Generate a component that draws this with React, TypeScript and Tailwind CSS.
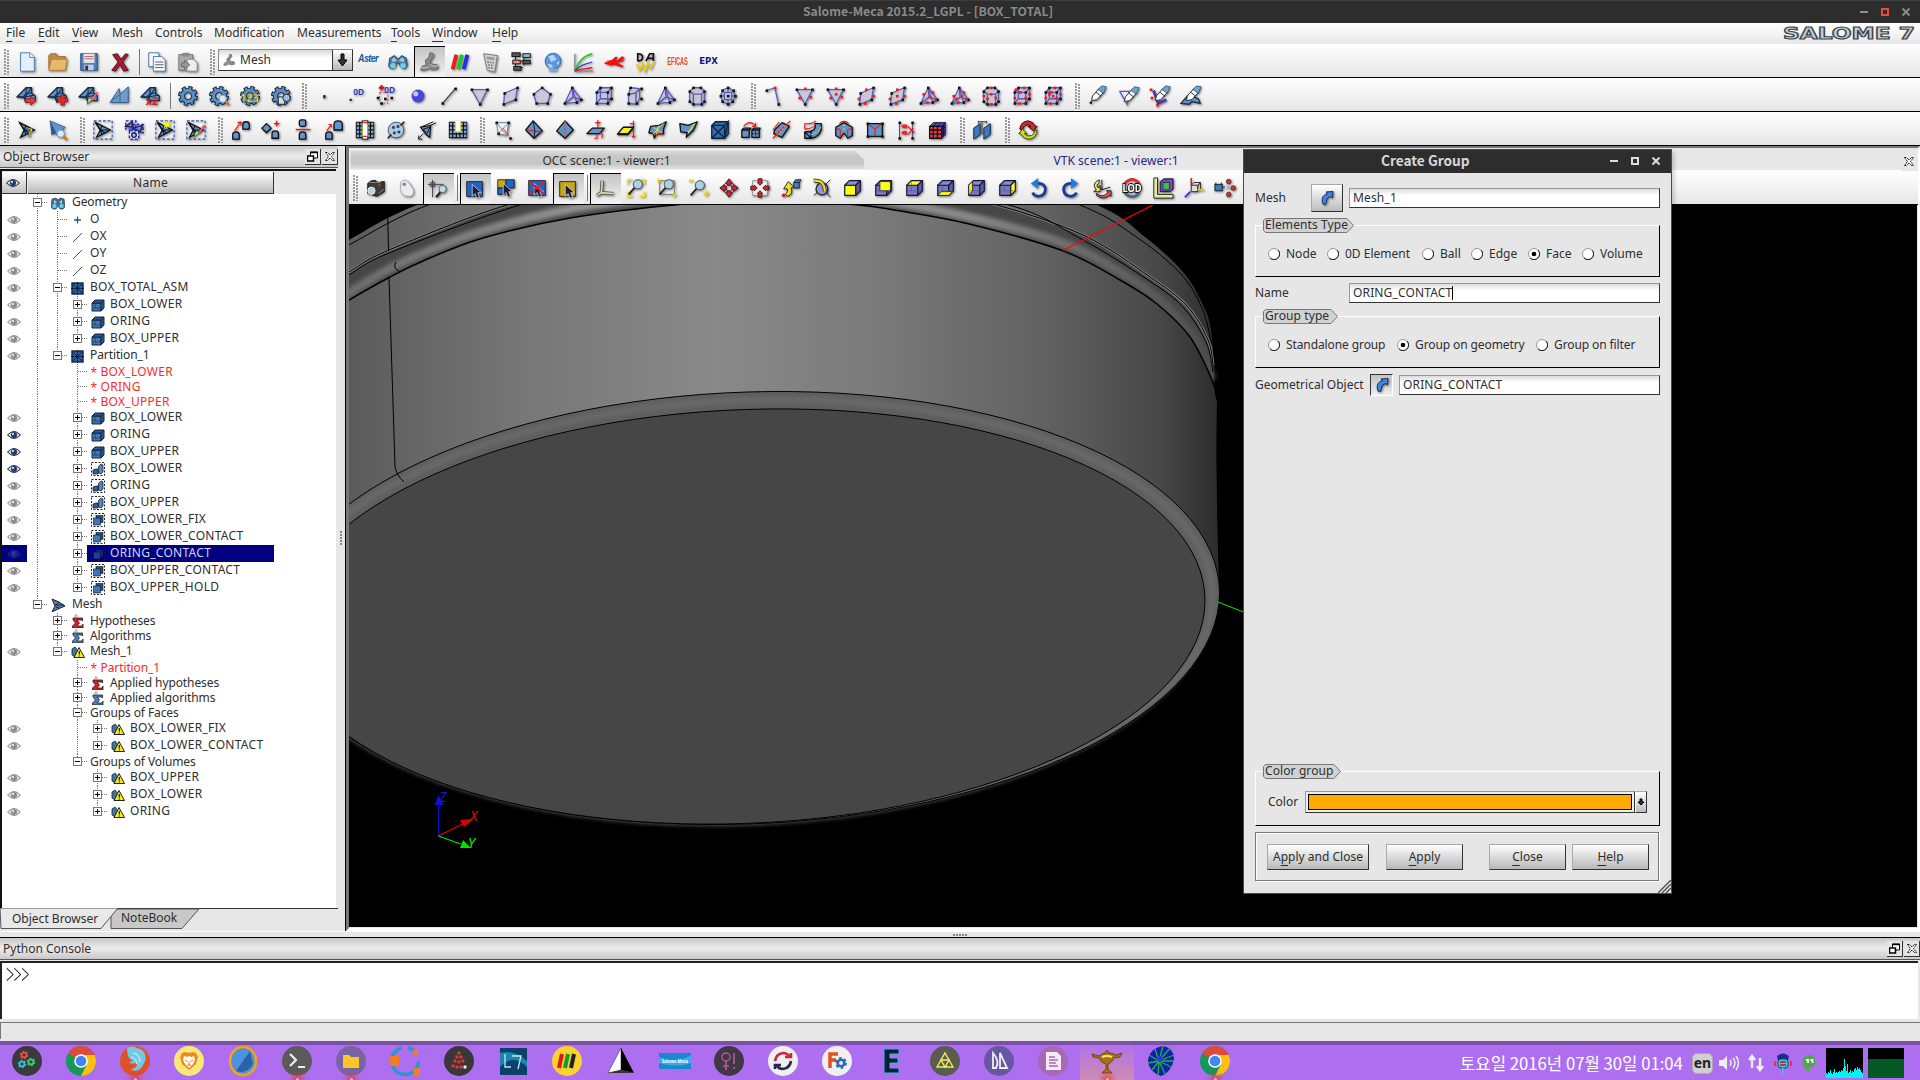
import React from "react";

type Pt = [number, number];

/* ---------- small drawing helpers ---------- */

const Dots = ({ p, c = "#111" }: { p: Pt[]; c?: string }) => (
  <>
    {p.map(([x, y], i) => (
      <rect key={i} x={x - 1.2} y={y - 1.2} width={2.8} height={2.8} fill={c} stroke="none" />
    ))}
  </>
);

const Wire = ({ d, p, r = [] }: { d: string; p: Pt[]; r?: Pt[] }) => (
  <g>
    <path d={d} fill="#dcdcf4" fillOpacity={0.6} stroke="#5a5ab8" strokeWidth={1.4} />
    <Dots p={p} />
    <Dots p={r} c="#f01818" />
  </g>
);

const BLUE = "#5f93cc";

const MeshTri = ({ children }: { children?: React.ReactNode }) => (
  <g>
    <path d="M1 13L11 3h6v6l4 3v5H12l-1 2-2-5z" fill={BLUE} stroke="#182c48" strokeWidth={1.5} strokeLinejoin="round" />
    <path d="M1 13h9l7-10M11 3v6l-3 4M10 13l10-2M10 13v4M11 9h6" stroke="#182c48" strokeWidth={1.2} fill="none" />
    {children}
  </g>
);

const Gear = ({ children }: { children?: React.ReactNode }) => (
  <g>
    <circle cx={12} cy={12} r={8.2} fill="none" stroke="#13263d" strokeWidth={5.4} strokeDasharray="4 2.44" />
    <circle cx={12} cy={12} r={6} fill="none" stroke="#13263d" strokeWidth={5.6} />
    <circle cx={12} cy={12} r={8.2} fill="none" stroke="#5d8fc4" strokeWidth={3.2} strokeDasharray="2.4 4.04" strokeDashoffset={-0.8} />
    <circle cx={12} cy={12} r={6} fill="none" stroke="#5d8fc4" strokeWidth={3.6} />
    {children}
  </g>
);

const Lens = ({ x = 15, y = 15, r = 4 }: { x?: number; y?: number; r?: number }) => (
  <g>
    <path d={`M${x + r * 0.7} ${y + r * 0.7}l4 4`} stroke="#d8741c" strokeWidth={2.4} />
    <circle cx={x} cy={y} r={r} fill="#d7ecf8" stroke="#7a93a8" />
  </g>
);

const Brush = ({ x = 0, y = 0 }: { x?: number; y?: number }) => (
  <g transform={`translate(${x} ${y})`}>
    <path d="M19 7l-6 9" stroke="#e33" strokeWidth={2.2} />
    <path d="M19 7l-6 9" stroke="#f9a" strokeWidth={0.8} />
    <path d="M13 15l-5 5 1-5 2-2z" fill="#d8f070" stroke="#3a5a10" strokeWidth={0.8} />
  </g>
);

const SelBox = ({ children }: { children?: React.ReactNode }) => (
  <g>
    <rect x={2} y={2} width={20} height={20} fill="none" stroke="#2c50b8" strokeWidth={1.2} strokeDasharray="3 2" />
    {children}
  </g>
);

const Arrowhead = () => (
  <g>
    <path d="M4 4l16 8-15 8 4-8z" fill={BLUE} stroke="#111" strokeWidth={1.4} />
    <path d="M9 12h11M4 4l5 8M9 12l2 5M11 7l-2 5l5 3" stroke="#111" strokeWidth={1.2} fill="none" />
  </g>
);

const Grid3 = ({ children }: { children?: React.ReactNode }) => (
  <g>
    <rect x={2} y={3} width={20} height={18} fill="#111" />
    {[0, 1, 2, 3, 4].map((i) =>
      [0, 1, 2, 3].map((j) => (
        <rect key={`${i}-${j}`} x={3 + i * 3.9} y={4 + j * 4.3} width={2.6} height={2.9} fill="#7ba6d8" />
      ))
    )}
    {children}
  </g>
);

const Eraser = ({ x = 0, y = 0 }: { x?: number; y?: number }) => (
  <g transform={`translate(${x} ${y})`}>
    <path d="M5 17l1-5 7-8 5 4-7 8z" fill="#fff" stroke="#222" />
    <path d="M12 5l4-4 5 1-3 7z" fill="#6fa4cc" stroke="#1d4c6c" strokeWidth={0.8} />
    <path d="M10 8l5 4" stroke="#222" />
  </g>
);

const CubeIcon = ({ face }: { face: number }) => (
  <g stroke="#16163a" strokeWidth={1.3} strokeLinejoin="round">
    <path d="M3 9h12v11H3z" fill={face === 0 ? "#ffff10" : "#7878be"} />
    <path d="M3 9l5-5h12l-5 5z" fill={face === 2 ? "#ffff10" : "#8c8ccc"} />
    <path d="M15 9l5-5v11l-5 5z" fill={face === 5 ? "#ffff10" : "#5c5ca4"} />
    {face === 1 && <path d="M7 5h12v10H7z" fill="#ffff10" strokeWidth={0.8} />}
    {face === 3 && <path d="M3 20l4-4h12l-4 4z" fill="#ffff10" strokeWidth={0.8} />}
    {face === 4 && <path d="M3 9l4-4v10l-4 5z" fill="#ffff10" strokeWidth={0.8} />}
    {face !== 0 && <path d="M8 4v11H4M8 15h11" fill="none" stroke="#50509a" strokeWidth={0.6} />}
  </g>
);

const RedGeo = ({ d, r, extra }: { d: string; r: string; extra?: React.ReactNode }) => (
  <g>
    <path d={d} fill={BLUE} stroke="#111" strokeWidth={1.4} strokeLinejoin="round" />
    <path d={r} fill="none" stroke="#ee1818" strokeWidth={1.2} />
    {extra}
  </g>
);

const Cursor = () => <path d="M9 7v13l3-3 2 5 3-1-2-5h4z" fill="#1c1c3c" stroke="#ddd" strokeWidth={0.8} />;

/* ---------- icon collections ---------- */

const tri = "M3 5h17L12 21z";
const triP: Pt[] = [[3, 5], [20, 5], [12, 21]];
const quad = "M5 9l14-6-2 13-13 5z";
const quadP: Pt[] = [[5, 9], [19, 3], [17, 16], [4, 21]];
const pyr = "M11 3L3 20l13-1 5-3zM3 20l9-7 9 3M11 3l5 16M12 13L11 3";
const pyrP: Pt[] = [[11, 3], [3, 20], [16, 19], [21, 16]];
const hexa = "M4 8h12v12H4zM8 3h12v12H8zM4 8l4-5M16 8l4-5M16 20l4-5M4 20l4-5";
const hexaP: Pt[] = [[4, 8], [16, 8], [4, 20], [16, 20], [8, 3], [20, 3], [20, 15]];
const prism = "M8 3h8l4 4-3 3H8L4 7zM4 7v11l4 3h9l3-3V7M8 10v11M17 10v11";
const prismP: Pt[] = [[8, 3], [16, 3], [4, 7], [20, 7], [4, 18], [20, 18], [8, 21], [17, 21]];

const fileIcons = [
  <g><path d="M5 2h10l5 5v15H5z" fill="#e3efff" stroke="#4a78b8" /><path d="M15 2v5h5" fill="#fff" stroke="#4a78b8" /></g>,
  <g><path d="M2 5l2-2h6l2 3h8v14H2z" fill="#b98c48" stroke="#9a7030" /><path d="M5 9h17l-2 12H2z" fill="#e8b968" stroke="#b58638" /></g>,
  <g><rect x={3} y={3} width={18} height={18} fill="#4c7fc4" stroke="#284c84" /><rect x={6} y={3} width={12} height={10} fill="#e6e6e0" /><path d="M7 6h10M7 8.500h10" stroke="#b44" strokeWidth={0.8} /><rect x={7} y={15} width={10} height={6} fill="#c8ccd4" /><rect x={8} y={16} width={3} height={5} fill="#333" /></g>,
  <path d="M4 4l5-1 4 6 5-6 3 1-6 8 6 9-5 1-4-7-5 7-4-1 7-9z" fill="#a51c30" stroke="#5a0c18" />,
];
const editIcons = [
  <g stroke="#4878a8" fill="#f4f8ff"><path d="M3 2h11v15H3z" /><path d="M8 6h9l4 4v12H8z" /><path d="M10 12h9M10 15h9M10 18h9" stroke="#555" /></g>,
  <g><rect x={2} y={4} width={15} height={17} fill="#aaa" stroke="#777" /><rect x={6} y={2} width={7} height={4} fill="#888" /><path d="M11 9h7l4 4v9H11z" fill="#eee" stroke="#888" /><path d="M14 15l-6-5v3H5v4h3v3z" fill="#999" stroke="#666" /></g>,
];
const moduleIcons = [
  <g><path d="M3 8l5-3 4 4 4-4 5 3 1 7c0 5-7 6-8 0l-1-2h-2l-1 2c-1 6-9 5-8 0z" fill="#4a7ca8" stroke="#1f3f60" /><path d="M5 9l3-2 3 4-5 1zM19 9l-3-2-3 4 5 1z" fill="#a4c4e0" /><circle cx={6.500} cy={16} r={3} fill="#6fd0e2" /><circle cx={17.500} cy={16} r={3} fill="#6fd0e2" /></g>,
  <g><path d="M13 2q5 0 4 4l-3 4-1 4 8 1 1 4q-6 3-10 0-5 3-9 2l1-4 5-2-1-5 4-3z" fill="#8a8a8a" stroke="#666" /><path d="M3 18q5 1 9 0M13 15q5 3 9 1" stroke="#c8c8c8" /></g>,
  <g strokeWidth={4.200}><path d="M4 20L8 4" stroke="#f01c1c" /><path d="M10 20l4-16" stroke="#20c820" /><path d="M16 20l4-16" stroke="#2030e8" /></g>,
  <g><path d="M4 3l15 2-3 18-8-2z" fill="#cfcfcf" stroke="#777" /><path d="M7 6l9 1-.5 3-8-1z" fill="#9a9a9a" /><path d="M8 12l7 1M9 15l5 1M9 18l5 1" stroke="#777" strokeWidth={1.600} strokeDasharray="2 1" /></g>,
  <g><path d="M5 4v14h8M5 11h12M14 4v12" stroke="#111" fill="none" /><rect x={1} y={2} width={9} height={4} fill="#555" stroke="#111" /><rect x={13} y={3} width={8} height={4} fill="#8bd" stroke="#111" /><rect x={2} y={10} width={8} height={4} fill="#f88" stroke="#111" /><rect x={13} y={10} width={8} height={4} fill="#555" stroke="#111" /><rect x={3} y={17} width={8} height={4} fill="#555" stroke="#111" /></g>,
  <g><circle cx={12} cy={11} r={8.500} fill="#5b97dc" stroke="#3a6cae" /><path d="M7 6l5-2 4 5-6 3zM6 14l5 1 1 4-4-1zM16 13l3-2-1 5z" fill="#b4d4f4" /><path d="M8 19h8l1 3H7z" fill="#7aaede" /></g>,
  <g fill="none" strokeWidth={1.400}><path d="M2 22V3M2 22h20" stroke="#888" /><path d="M2 22C6 10 12 5 21 3" stroke="#10d010" /><path d="M2 22c4-6 11-8 19-10" stroke="#2030e8" /><path d="M2 22c6-3 10-2 19-4" stroke="#f01818" /></g>,
  <g fill="#f01010"><path d="M1 11l7-1 5-4 2 1-2 3h8l1 1-8 2 7 3-1 2-9-3-3 1-7-2-1-1 5-2z" /><path d="M15 10l5-4 2 2-5 3M14 13l7 4" stroke="#f01010" /></g>,
  <g fill="none"><path d="M3 11V3c8 0 6 8 0 8M12 11l4-8h4v8M13 8h7" stroke="#111" strokeWidth={1.800} /><path d="M2 14l3 7 3-7 3 8 3-9 3 6 4-8" stroke="#e8cc10" strokeWidth={1.800} /></g>,
];

const row2a = [
  <MeshTri><path d="M10 15h6v-3l6 5-6 5v-3h-6z" fill="#e33" stroke="#611" strokeWidth={0.700} /></MeshTri>,
  <MeshTri><path d="M15 11h4v3.500h3.500v4H19V22h-4v-3.500h-3.500v-4H15z" fill="#e22" stroke="#611" strokeWidth={0.600} /></MeshTri>,
  <MeshTri><Brush x={2} y={1} /></MeshTri>,
  <g><path d="M1 19L11 4l1 6 9-8v17z" fill="#6d9cd0" stroke="#345c8a" /><path d="M12 10v9M3 17l8-6" stroke="#345c8a" /></g>,
  <MeshTri><text x={6} y={22} fontSize={12} fontWeight={700} fill="#e01c1c" fontFamily="Noto Sans, sans-serif">x2</text></MeshTri>,
];
const gears = [
  <Gear />,
  <Gear><Lens x={16} y={15} /></Gear>,
  <Gear><text x={1.500} y={18} fontSize={11} fontWeight={700} fill="#ffff20" stroke="#444" strokeWidth={0.300} textLength={20} fontFamily="Noto Sans, sans-serif">123</text></Gear>,
  <Gear><path d="M9 13h7v8H9z" fill="#cfdeee" stroke="#222" /><circle cx={18} cy={14} r={4} fill="#9cc0e4" stroke="#222" /></Gear>,
];
const row2b = [
  <rect x={10} y={11} width={2.500} height={3.500} fill="#222" />,
  <g><text x={9} y={11} fontSize={9.500} fontWeight={600} fill="#2038c0" fontFamily="Noto Sans, sans-serif" textLength={12} lengthAdjust="spacingAndGlyphs">0D</text><rect x={5} y={15} width={2.400} height={2.400} fill="#222" /></g>,
  <g><path d="M3 3h6M6 0v6" stroke="#d01020" strokeWidth={2.200} /><text x={9} y={9} fontSize={9.500} fontWeight={600} fill="#2038c0" fontFamily="Noto Sans, sans-serif" textLength={12} lengthAdjust="spacingAndGlyphs">0D</text><path d="M4 8h9v12H4z" stroke="#e02838" strokeDasharray="2 2" fill="none" /><Dots p={[[2, 14], [10, 15], [6, 20], [17, 14]]} /></g>,
  <g><circle cx={12} cy={12} r={7} fill="#4646d8" /><circle cx={9.500} cy={9.500} r={2.800} fill="#c4c4ff" /></g>,
  <g><path d="M5 20L19 4" stroke="#444" strokeWidth={1.500} /><Dots p={[[5, 20], [19, 4]]} /></g>,
  <Wire d={tri} p={triP} />,
  <Wire d={quad} p={quadP} />,
  <Wire d="M12 3l9 7-3 10H6L3 10z" p={[[12, 3], [21, 10], [18, 20], [6, 20], [3, 10]]} />,
  <Wire d={pyr} p={pyrP} />,
  <Wire d={hexa} p={hexaP} />,
  <Wire d="M7 3l10 1-5 5-7 1zM5 10v10l8 1V9M17 4v11l-4 6" p={[[7, 3], [19, 4], [5, 10], [5, 20], [14, 20], [19, 15]]} />,
  <Wire d={pyr} p={pyrP} />,
  <Wire d={prism} p={prismP} />,
  <Wire d="M12 3l5 3 3 6-3 6-5 3-6-3-2-6 2-6zM8 8h8v8H8zM12 3v5M4 12h4M16 12h4M12 16v5" p={[[12, 3], [18, 6], [20, 12], [17, 18], [12, 21], [6, 18], [4, 12], [6, 6], [12, 12]]} />,
];
const row2c = [
  <g><path d="M4 6l9-3 4 18" stroke="#5a5ac4" strokeWidth={1.400} fill="none" /><Dots p={[[4, 6], [17, 21]]} /><Dots p={[[13, 3]]} c="#f01818" /></g>,
  <Wire d={tri} p={triP} r={[[12, 4], [6, 14], [18, 13]]} />,
  <Wire d={tri} p={triP} r={[[12, 4], [6, 14], [18, 13], [12, 10]]} />,
  <Wire d={quad} p={quadP} r={[[11, 5], [19, 12], [10, 20], [3, 15]]} />,
  <Wire d={quad} p={quadP} r={[[11, 5], [19, 12], [10, 20], [3, 15], [11, 12]]} />,
  <Wire d={pyr} p={pyrP} r={[[6, 10], [10, 19], [16, 8], [13, 13], [19, 17]]} />,
  <Wire d={pyr} p={pyrP} r={[[5, 12], [10, 19], [16, 8], [8, 15], [19, 16], [14, 12]]} />,
  <Wire d={prism} p={prismP} r={[[12, 3], [4, 12], [8, 15], [17, 14], [12, 21], [12, 10]]} />,
  <Wire d={hexa} p={hexaP} r={[[14, 3], [4, 14], [9, 20], [16, 14], [20, 10], [10, 8], [5, 5]]} />,
  <Wire d={hexa} p={hexaP} r={[[14, 3], [4, 14], [9, 20], [16, 14], [20, 10], [10, 8], [12, 12], [8, 10]]} />,
];
const row2d = [
  <g><Eraser /><rect x={3} y={18} width={2.500} height={2.500} fill="#111" /></g>,
  <g><path d="M2 7h10l-2 14z" fill="#e8e8fa" stroke="#5a5ac4" strokeWidth={1.400} /><Eraser x={2} y={1} /></g>,
  <g><path d="M5 6l5 14 9-4" fill="none" stroke="#3c3cb0" strokeWidth={3} /><Dots p={[[2, 5], [3, 14], [9, 22]]} c="#f01818" /><Eraser x={2} /></g>,
  <g><path d="M1 20l8-9 11 4 2 5-9-2-3 3z" fill={BLUE} stroke="#14304c" strokeWidth={1.400} /><Eraser x={2} /></g>,
];

const row3a = [
  <g><Arrowhead /><text x={12} y={20} fontSize={13} fontWeight={700} fill="#ffee20" stroke="#333" strokeWidth={0.500} fontFamily="Noto Sans, sans-serif">?</text></g>,
  <g><path d="M3 2l17 7-4 3 1 6-7-1z" fill={BLUE} stroke="#335" strokeWidth={0.600} /><path d="M3 2l2 16 5-3z" fill="#2f5a8c" /><Lens x={15} y={16} /></g>,
];
const row3b = [
  <SelBox><Arrowhead /></SelBox>,
  <g fill="none" stroke="#1c1cd8" strokeWidth={1.500}><path d="M3 8l7-5 1 6zM11 10l10-3-2 7z" fill={BLUE} stroke="#223" /><rect x={3} y={2} width={11} height={9} strokeDasharray="3 2" /><rect x={10} y={6} width={12} height={9} strokeDasharray="3 2" /><rect x={7} y={13} width={10} height={9} fill="#dfe8f4" strokeDasharray="3 2" /><circle cx={12} cy={17.500} r={2.500} fill="#9cc0e4" stroke="#223" /></g>,
  <SelBox><Arrowhead /><path d="M14 2v8M10 6h8M11 3l6 6M17 3l-6 6" stroke="#f4f430" strokeWidth={1.400} /></SelBox>,
  <SelBox><Arrowhead /><Brush x={2} /></SelBox>,
];
const bell = (x: number, y: number) => `M${x} ${y + 8}v-5q0-3 3.500-3t3.500 3v5z`;
const row3c = [
  <g><path d={bell(14, 3)} fill={BLUE} stroke="#111" strokeWidth={1.400} /><path d={bell(3, 14)} fill={BLUE} stroke="#111" strokeWidth={1.400} /><path d="M5 13l7-10M12 3l-4 1M12 3v4" stroke="#e11" fill="none" strokeWidth={1.200} /></g>,
  <g><path d="M1 10l5-5 5 5-5 5z" fill={BLUE} stroke="#111" strokeWidth={1.400} /><path d={bell(12, 13)} fill={BLUE} stroke="#111" strokeWidth={1.400} /><path d="M14 5h6M17 2v6" stroke="#e11" strokeWidth={1.500} /></g>,
  <g><rect x={8} y={1} width={7} height={7} rx={2} fill={BLUE} stroke="#111" strokeWidth={1.400} /><path d={bell(8, 14)} fill={BLUE} stroke="#111" strokeWidth={1.400} /><path d="M4 11.500h16" stroke="#e11" strokeWidth={1.500} /></g>,
  <g><path d="M12 12V6q0-4 4.500-4T21 6v6z" fill={BLUE} stroke="#111" strokeWidth={1.400} /><path d={bell(3, 14)} fill={BLUE} stroke="#111" strokeWidth={1.400} /><path d="M4 13l5-7M9 6H6M9 6v3" stroke="#e11" fill="none" strokeWidth={1.200} /></g>,
  <Grid3><rect x={9} y={2} width={6} height={20} fill="#fff" stroke="#111" /><path d="M9 5v14M15 5v14" stroke="#e8d820" /><path d="M10 4h4M10 19h4" stroke="#e02020" strokeWidth={1.500} /></Grid3>,
  <g><circle cx={12} cy={12} r={8.500} fill="#aacbe8" stroke="#456" /><path d="M3 21l4-4M21 3l-4 4" stroke="#111" strokeWidth={1.600} /><Dots p={[[9, 9], [14, 8], [15, 14], [10, 15]]} c="#334" /></g>,
  <g><path d="M5 9l11-2-1 13-4-3z" fill={BLUE} stroke="#111" strokeWidth={1.300} /><path d="M8 11l7-2-3 7zM5 9l14-6M2 22l6-6M3 22v-4M3 22h4M16 7l6-3" stroke="#111" fill="none" /></g>,
  <Grid3><path d="M9 2h6v12H9z" fill="#fff" /><path d="M9 3v11h6V3" fill="none" stroke="#e8d820" strokeWidth={1.200} /></Grid3>,
];
const row3d = [
  <g><path d="M5 4h13l-2 14-9-2zM5 4l11 14M18 4L7 16" fill="#eef" stroke="#688" /><Dots p={[[5, 4], [18, 4], [20, 21], [7, 16]]} /><path d="M12 10l6 8" stroke="#e11" /></g>,
  <RedGeo d="M11 2l10 11-9 8-9-9z" r="M4 12l16 2" extra={<path d="M11 2l2 11-1 8" stroke="#111" fill="none" />} />,
  <RedGeo d="M12 2l9 10-9 9-9-8z" r="" extra={<path d="M12 2v18" stroke="#f04010" strokeWidth={1.600} strokeDasharray="2 2" />} />,
  <RedGeo d="M8 10h13l-5 6H2z" r="M14 1v9M11 4h6M13 17v4h-3M16 15q5 1 2 6" />,
  <RedGeo d="M8 10h11l-6 7H2z" r="M19 2v19M15 5h5M17 19h4" extra={<path d="M8 9h11l-6 7H2z" fill="#ffee20" stroke="#111" strokeWidth={1.400} />} />,
  <RedGeo d="M4 8l9-1 8-4-3 8 0 5-8 1-2 4-1-5-5-1z" r="M8 16l10 1" extra={<path d="M7 9l9 6M18 4L6 17M13 7l-3 10" stroke="#f0e840" />} />,
  <RedGeo d="M2 5l9 2 10-4-4 9-8 8 1-5-7-1z" r="" extra={<path d="M18 5l-7 10" stroke="#f0e840" strokeWidth={1.300} />} />,
  <g><path d="M3 7l4-4h14v13l-4 5H3z" fill="#346ba8" stroke="#0c2444" strokeWidth={1.400} /><path d="M3 7h14v14M3 7l14 14L21 3l-4 4M17 7L3 21" stroke="#0c2444" fill="none" strokeWidth={1.500} /></g>,
  <RedGeo d="M2 12h8v8H2zM13 12h8v8h-8zM2 12l2-2h8l-2 2M13 12l2-2h7l-1 2" r="M4 8q7-8 13 0M17 8v-4M17 8h-4" extra={<path d="M17 12v8M13 16h8" stroke="#333" />} />,
  <RedGeo d="M4 12l8-8 8 4-8 12-9-4z" r="M2 21L21 2M2 12L9 3" extra={<path d="M7 18L17 6" stroke="#f0e840" strokeDasharray="2 2" />} />,
  <RedGeo d="M3 14h7v7H3zM3 14q14 0 11-9h7v7q-3 8-11 9z" r="M3 5q8 1 12-3M3 5v6M3 11q8 0 12-5" extra={<path d="M10 17q8-2 11-9" stroke="#fe2" fill="none" strokeDasharray="2 2" />} />,
  <RedGeo d="M3 9l9-5 9 5v9l-5 3-4-6-4 6-5-3z" r="M4 10l4 2v8M20 10l-4 2v8M7 5q5-5 10 0" extra={<path d="M12 6v9" stroke="#fe2" strokeDasharray="2 2" />} />,
  <RedGeo d="M4 5h16v14H4z" r="M4 5l8 6 8-6M12 11v8" extra={<Dots p={[[4, 5], [20, 5], [4, 19], [20, 19]]} />} />,
  <g><path d="M5 4v17M19 4v17" stroke="#346" /><path d="M7 8h6M7 15h6M14 8l7 7M14 17l6-7" stroke="#e11" strokeWidth={1.300} /><Dots p={[[5, 4], [5, 21], [19, 4], [19, 21]]} /><rect x={8} y={6} width={5} height={4} fill="#e22" /><rect x={8} y={13} width={5} height={4} fill="#e22" /></g>,
  <g><path d="M4 8l4-4h13l-4 4z" fill="#5050d0" stroke="#112" /><path d="M17 8l4-4v13l-4 4z" fill="#3838a8" stroke="#112" /><path d="M17 12.500l4-4M17 16.500l4-4M19 6v13M8 8l4-4M12.500 8l4-4" stroke="#111" /><path d="M4 8h13v13H4z" fill="#f04040" stroke="#111" strokeWidth={1.400} /><path d="M8 8v13M12.500 8v13M4 12h13M4 16.500h13" stroke="#111" strokeWidth={1.500} /></g>,
];
const row3e = [
  <g><path d="M3 10l7-5v12l-7 5zM14 10l7-5v12l-7 5z" fill="#3f78bc" stroke="#0c2444" /><path d="M8 3h9M8 2v3M17 2v3M12 3v14" stroke="#333" fill="none" /></g>,
];
const row3f = [
  <g><path d="M3 11Q4 3 12 2q6 1 8 6l2 0-4 5-6-5h3q-3-3-6-1-2 1-3 5z" fill="#c03030" stroke="#400" /><path d="M22 12q0 8-8 10-7 0-10-6H2l4-5 5 5H8q4 4 8 2 3-1 3-5z" fill="#c8e020" stroke="#340" /></g>,
];

const view = {
  camera: <g><path d="M3 7l4-3h5l2 2 7-1v11l-8 5-10-3z" fill="#3a3a3a" stroke="#111" /><path d="M5 6h12M15 18l6-5" stroke="#888" /><circle cx={7} cy={15} r={4} fill="#b8d4e0" stroke="#eee" /><rect x={14} y={8} width={3} height={2} fill="#e22" /></g>,
  mouse: <g><path d="M5 6q4-5 9 0l5 8q1 8-6 7-6 0-8-7z" fill="#ececec" stroke="#aaa" /><circle cx={9} cy={8} r={2} fill="#7a8cc8" /></g>,
  zoomAxis: <g><path d="M1 7h17M6 2v19" stroke="#444" /><rect x={4} y={5} width={4} height={4} fill="none" stroke="#444" /><path d="M15 15l-5 6" stroke="#222" strokeWidth={2.500} /><circle cx={17} cy={12} r={4} fill="#bcdde4" stroke="#556" /></g>,
  selBlue: <g><rect x={3} y={4} width={17} height={16} fill="#1c66c8" stroke="#222" /><Cursor /></g>,
  selHalf: <g><path d="M3 3h9v9H3z" fill="#c4a818" stroke="#333" /><path d="M12 3h9v9h-9zM3 12h9v7H3z" fill="#1c66c8" stroke="#222" /><Cursor /></g>,
  selRed: <g><rect x={3} y={4} width={18} height={16} fill="#1c66c8" stroke="#222" /><Cursor /><path d="M4 5l16 14M20 5L4 19" stroke="#e02030" strokeWidth={1.800} /></g>,
  selGold: <g><rect x={3} y={4} width={17} height={16} fill="#c4a818" stroke="#222" /><Cursor /></g>,
  axes: <g><path d="M9 3l-1 13 13 1M8 16l-5 3" stroke="#555" strokeWidth={3.600} fill="none" /><path d="M9 3l-1 13 13 1M8 16l-5 3" stroke="#d8d8a8" strokeWidth={1.800} fill="none" /></g>,
};
const bigLens = (x: number, y: number) => (
  <g><path d={`M${x - 3} ${y + 3}l-7 8`} stroke="#222" strokeWidth={2} /><circle cx={x} cy={y} r={5} fill="#a8d4de" stroke="#445" /></g>
);
const viewMore = [
  <g><path d="M3 8V3h5M16 3h5v5M21 16v5h-5M8 21H3v-5" stroke="#f0e800" strokeWidth={1.800} fill="none" />{bigLens(14, 8)}</g>,
  <g><rect x={4} y={4} width={16} height={15} fill="none" stroke="#777" />{bigLens(14, 8)}<path d="M3 2v4M1 4h4M20 18v4M18 20h4" stroke="#e8d800" strokeWidth={1.500} /></g>,
  <g><path d="M2 4h5M18 18h6M21 15v6" stroke="#e8d800" strokeWidth={1.800} />{bigLens(14, 9)}</g>,
  <g fill="#c02838" stroke="#511"><path d="M12 2l4 5h-2v2h-4V7H8zM12 22l4-5h-2v-2h-4v2H8zM2 12l5-4v2h2v4H7v2zM22 12l-5-4v2h-2v4h2v2z" /></g>,
  <g fill="#c02838" stroke="#511"><path d="M4 4h16v16H4z" fill="#eee" stroke="#888" /><path d="M12 9L9 6h1V2h4v4h1zM12 15l-3 3h1v4h4v-4h1zM9 12L6 9v1H2v4h4v1zM15 12l3-3v1h4v4h-4v1z" /></g>,
  <g><path d="M15 6h6v6h-6zM15 6l2-3h6l-2 3" fill="#4a80b8" stroke="#123" /><path d="M8 21q7-2 4-9l3-1-6-6-5 8 4 0q1 3-2 6z" fill="#f0e020" stroke="#222" /><circle cx={4} cy={20} r={2} fill="#c22" /></g>,
  <g><circle cx={12} cy={13} r={6.500} fill="#9494d0" stroke="#223" strokeWidth={1.400} /><path d="M3 4q12-1 12 12" stroke="#222" strokeWidth={4} fill="none" /><path d="M3 4q12-1 12 12" stroke="#f0e020" strokeWidth={2.400} fill="none" /><path d="M16 8l5-5M17 17l4 5M3 20l4-3" stroke="#222" /></g>,
  ...[0, 1, 2, 3, 4, 5].map((f) => <CubeIcon face={f} />),
  <g><path d="M9 7q9-1 10 6 0 7-7 8-5 0-7-4" stroke="#1a3c94" strokeWidth={3} fill="none" /><path d="M3 7l8-6v12z" fill="#1a80e0" /></g>,
  <g><path d="M15 7q-9-1-10 6 0 7 7 8 5 0 7-4" stroke="#1a3c94" strokeWidth={3} fill="none" /><path d="M21 7l-8-6v12z" fill="#1a80e0" /></g>,
  <g><path d="M10 3Q1 7 7 14l-3 2h7v-7l-2 3q-3-3 1-6z" fill="#f0e870" stroke="#222" /><path d="M7 18q7 6 13-2l-2-1h5v6l-2-1q-6 6-14 0z" fill="#e05050" stroke="#222" /><path d="M13 3v11l9-3M13 14l-2-3" stroke="#111" fill="none" /></g>,
  <g><path d="M4 7q8-9 16 0M4 7v3M20 7v3" stroke="#c33" strokeWidth={3} fill="none" /><path d="M4 17q8 9 16 0" stroke="#468" strokeWidth={3} fill="none" /><text x={1.500} y={16} fontSize={11} fontWeight={700} fill="#fff" stroke="#111" strokeWidth={2} paintOrder="stroke" textLength={21} lengthAdjust="spacingAndGlyphs" fontFamily="Noto Sans, sans-serif">LOD</text></g>,
  <g><path d="M2 1v22h21v-4H6V1z" fill="#e4eca0" stroke="#222" /><path d="M9 5l4-3h10v11l-3 3H9z" fill="#7848b0" stroke="#111" /><path d="M12 6h7v8h-7z" fill="#40c040" stroke="#236" /></g>,
  <g><path d="M9 9h7v7H9zM9 9l3-3h7l-3 3M19 6v7l-3 3" fill="#ddd" stroke="#222" /><path d="M9 9V1" stroke="#e11" strokeWidth={1.600} /><path d="M8 16l-6 6" stroke="#33d" strokeWidth={1.800} /><path d="M16 14h7" stroke="#e8c800" strokeWidth={2} /></g>,
  <g><rect x={1} y={8} width={8} height={7} fill="#3a7cb8" stroke="#123" /><path d="M9 11h3M2 6v3M8 6v3" stroke="#123" /><circle cx={16} cy={5} r={2.500} fill="#c33" stroke="#533" /><circle cx={21} cy={12} r={2.500} fill="#c33" stroke="#533" /><circle cx={16} cy={19} r={2.500} fill="#c33" stroke="#533" /><path d="M13 9l5 5M18 9l-5 5" stroke="#999" /></g>,
];

/* ---------- tool bar parts ---------- */

const Slot = ({ children, on = false }: { children: React.ReactNode; on?: boolean }) => (
  <div
    className={
      on
        ? "flex h-[31px] w-[31px] shrink-0 items-center justify-center border-l border-t border-black bg-linear-to-b from-[#c4c4c4] to-[#f4f4f4]"
        : "flex h-[31px] w-[31px] shrink-0 items-center justify-center"
    }
  >
    <svg width={22} height={22} viewBox="0 0 24 24" fill="none" className="-translate-x-px drop-shadow-[1px_1px_1px_rgba(0,0,0,0.5)]">
      {children}
    </svg>
  </div>
);

const Slots = ({ items }: { items: React.ReactNode[] }) => (
  <>
    {items.map((n, i) => (
      <Slot key={i}>{n}</Slot>
    ))}
  </>
);

const Grip = () => (
  <svg width={5} height={26} className="shrink-0">
    {Array.from({ length: 9 }, (_, i) => (
      <g key={i} fill="#999">
        <rect x={0} y={i * 3} width={2} height={2} />
        <rect x={3} y={i * 3 + 1} width={2} height={2} />
      </g>
    ))}
  </svg>
);

const Sep = () => <div className="ml-[3px] mr-[2px] h-[26px] w-px shrink-0 bg-[#777]" />;

const Bar = ({ children }: { children: React.ReactNode }) => (
  <div className="flex h-[34px] shrink-0 items-center border-b border-black bg-linear-to-b from-white to-[#e6e6e6] pl-1 pt-[2px]">{children}</div>
);

const menus: [string, string, string][] = [
  ["F", "ile", "w-[32px]"], ["E", "dit", "w-[34px]"], ["V", "iew", "w-[40px]"], ["", "Mesh", "w-[43px]"],
  ["", "Controls", "w-[59px]"], ["", "Modification", "w-[83px]"], ["", "Measurements", "w-[94px]"],
  ["T", "ools", "w-[41px]"], ["W", "indow", "w-[60px]"], ["H", "elp", "w-[40px]"],
];

/* ---------- object tree ---------- */

type Row = { g: string; icon?: string; t: string; eye?: 0 | 1 | 2; h: 15 | 17; red?: boolean; sel?: boolean };
const r = (g: string, icon: string, t: string, eye: 0 | 1 | 2 = 1, h: 15 | 17 = 17): Row => ({ g, icon, t, eye, h });
const red = (g: string, t: string): Row => ({ g, t, h: 15, red: true, eye: 0 });

const rows: Row[] = [
  r("m", "geom", "Geometry", 0),
  r("|T", "plus", "O"), r("|T", "line", "OX"), r("|T", "line", "OY"), r("|T", "line", "OZ"),
  r("|m", "comp", "BOX_TOTAL_ASM"),
  r("||p", "solid", "BOX_LOWER"), r("||p", "solid", "ORING"), r("||q", "solid", "BOX_UPPER"),
  r("|n", "comp", "Partition_1"),
  red("| T", "BOX_LOWER"), red("| T", "ORING"), red("| T", "BOX_UPPER"),
  r("| p", "solid", "BOX_LOWER"), r("| p", "solid", "ORING", 2), r("| p", "solid", "BOX_UPPER", 2),
  r("| p", "gsolid", "BOX_LOWER", 2), r("| p", "gsolid", "ORING"), r("| p", "gsolid", "BOX_UPPER"),
  r("| p", "gface", "BOX_LOWER_FIX"), r("| p", "gface", "BOX_LOWER_CONTACT"),
  { ...r("| p", "gface", "ORING_CONTACT"), sel: true },
  r("| p", "gface", "BOX_UPPER_CONTACT"), r("| q", "gface", "BOX_UPPER_HOLD"),
  r("n", "mesh", "Mesh", 0),
  r(" p", "sigR", "Hypotheses", 0, 15), r(" p", "sigB", "Algorithms", 0, 15), r(" n", "warn", "Mesh_1"),
  red("  T", "Partition_1"),
  r("  p", "sigR", "Applied hypotheses", 0, 15), r("  p", "sigB", "Applied algorithms", 0, 15),
  r("  m", "", "Groups of Faces", 0, 15), r("  |p", "warn", "BOX_LOWER_FIX"), r("  |q", "warn", "BOX_LOWER_CONTACT"),
  r("  n", "", "Groups of Volumes", 0, 15),
  r("   p", "warn", "BOX_UPPER"), r("   p", "warn", "BOX_LOWER"), r("   q", "warn", "ORING"),
];

const Eye = ({ k, dim }: { k: number; dim?: boolean }) => {
  const c = dim ? "#26268e" : k === 2 ? "#222" : "#8c8c8c";
  return (
    <svg width={14} height={10} viewBox="0 0 14 10" className="-translate-x-px">
      <path d="M.5 5Q7-2 13.500 5 7 12 .5 5z" fill={dim ? "#10107c" : k === 2 ? "#cdd4e4" : "#ddd"} stroke={c} />
      <circle cx={7} cy={5} r={3} fill={k === 2 ? "#1c3a78" : c} />
      <circle cx={6} cy={4} r={1} fill={dim ? "#4444a0" : "#fff"} />
    </svg>
  );
};

const Cell = ({ c, h }: { c: string; h: number }) => {
  const m = (h - 1) / 2;
  const box = "pqmn".includes(c);
  const dash = { stroke: "#777", strokeDasharray: "1 1" };
  return (
    <svg width={20} height={h} className="shrink-0" shapeRendering="crispEdges">
      {c !== " " && <path d={`M10.500 0V${"qn".includes(c) ? m : h}`} {...dash} />}
      {c !== " " && c !== "|" && <path d={`M${box ? 15 : 11} ${m + 0.5}H20`} {...dash} />}
      {box && (
        <g>
          <rect x={6.500} y={m - 3.500} width={8} height={8} fill="#fff" stroke="#777" />
          <path d={`M8 ${m + 0.500}h5`} stroke="#000" />
          {"pq".includes(c) && <path d={`M10.500 ${m - 2}v5`} stroke="#000" />}
        </g>
      )}
    </svg>
  );
};

const sigma = (c: string) => (
  <g><path d="M2 4h9.500v3l-1-1H6l2.500 3L6 12h5l1-2v4H1.500v-2l3-3-2.500-3z" fill={c} stroke="#222" strokeWidth={0.800} /><path d="M4 3.500V1.500q1.500-2 2 0v2" fill="none" stroke="#666" strokeWidth={0.700} /></g>
);
const treeIcons: Record<string, React.ReactNode> = {
  geom: <g><path d="M1 3l4-1 2 2 2-2 4 1 1 6q0 5-5 4L7 10l-2 3q-5 1-5-4z" fill="#46698c" stroke="#234" strokeWidth={0.600} /><path d="M3 4l3 2-3 2zM11 4L8 6l3 2z" fill="#a8cce8" /><circle cx={3.500} cy={10} r={2.200} fill="#5ed0e4" /><circle cx={10.500} cy={10} r={2.200} fill="#5ed0e4" /></g>,
  plus: <path d="M3 7h7M6.500 3.500v7" stroke="#2a5484" strokeWidth={1.300} />,
  line: <path d="M2 12L11 3" stroke="#2a5484" />,
  comp: <g><rect x={1} y={2} width={11} height={11} fill="#2f5f9c" stroke="#12243c" strokeWidth={1.400} /><path d="M2 3l9 9M11 3l-9 9M6.500 1v13M0 7.500h13" stroke="#0c1830" strokeWidth={0.800} /></g>,
  solid: <g stroke="#14243c" strokeWidth={1}><path d="M1 5h9v8H1z" fill="#4078b8" /><path d="M1 5l3-3h9l-3 3zM10 5l3-3v8l-3 3z" fill="#2c5890" /><path d="M4 6v4H2M4 10h5" stroke="#1c3c68" fill="none" strokeWidth={0.800} /></g>,
  gsolid: <g><rect x={0.500} y={0.500} width={13} height={13} fill="none" stroke="#222" strokeDasharray="2 1.500" /><path d="M2 12V8l3-1 2 0v5z" fill="#2f62a0" stroke="#111" strokeWidth={0.700} /><path d="M7.500 11V4.500L10 2l2 1v7l-2 2z" fill="#4a86c8" stroke="#111" strokeWidth={0.700} /></g>,
  gface: <g><rect x={0.500} y={0.500} width={13} height={13} fill="none" stroke="#222" strokeDasharray="2 1.500" /><rect x={5} y={2.500} width={7} height={7} fill="#27507f" stroke="#111" strokeWidth={0.600} /><rect x={2.500} y={5} width={7} height={7} fill="#3e76b8" stroke="#111" strokeWidth={0.600} /></g>,
  mesh: <g><path d="M1 1l7 3 6 4-7 3-6 3 3-6z" fill="#4c7fb4" stroke="#222" /><path d="M4 7h9M4 8l4-4M5 9l3 1" stroke="#222" /></g>,
  sigR: sigma("#d82020"),
  sigB: sigma("#4a80b8"),
  warn: <g><path d="M1 4l3-2 5 6-5 4-3-2z" fill="#3e76a8" stroke="#222" strokeWidth={0.800} /><path d="M8 2.500L13.500 12.500H3z" fill="#f6ec10" stroke="#222" /><path d="M8.300 6v3.500M8.300 10.500v1" stroke="#111" strokeWidth={1.200} /></g>,
};

const TreeRow = ({ row }: { row: Row }) => (
  <div className={row.h === 17 ? "flex h-[17px]" : "flex h-[15px]"}>
    <div className={row.sel ? "flex w-[25px] items-center justify-center bg-[#000080]" : "flex w-[25px] items-center justify-center"}>
      {row.eye ? <Eye k={row.eye} dim={row.sel} /> : null}
    </div>
    {row.g.split("").map((c, i) => (
      <Cell key={i} c={c} h={row.h} />
    ))}
    <div className={row.sel ? "flex w-[187px] items-center bg-[#000080] text-[#d4d4e8]" : row.red ? "flex items-center text-[#fa2a2a]" : "flex items-center"}>
      {row.red && <span className="w-[13.500px] pl-[3.500px] pt-[3px] leading-none">*</span>}
      {row.icon && (
        <div className={row.g.length === 1 ? "w-[25px] pl-[3.500px]" : "w-[23px] pl-[3.500px]"}>
          <svg width={14} height={14} viewBox="0 0 14 14" fill="none" className={row.sel ? "opacity-50" : ""}>
            {treeIcons[row.icon]}
          </svg>
        </div>
      )}
      <span
        className={
          (row.icon || row.red ? "" : "pl-[3px] ") +
          (row.h === 17 ? "relative -top-px " : "") +
          "whitespace-nowrap leading-none " +
          (/[a-z]/.test(row.t) ? "tracking-[-0.100px]" : "tracking-[0.280px]")
        }
      >
        {row.t}
      </span>
    </div>
  </div>
);

/* ---------- docks ---------- */

const FloatGlyph = () => (
  <div className="flex size-4 items-center justify-center border-b border-r border-[#333] bg-[#e4e4e4]">
    <svg width={11} height={11} fill="#fff" stroke="#000"><path d="M3.500 1h7v6h-7z" /><path d="M3 1.500h8M.5 5h6v5h-6z" strokeWidth={1.500} /></svg>
  </div>
);
const CloseGlyph = () => (
  <svg width={10} height={9} fill="#fff" stroke="#000"><path d="M.5.5h2L5 3 7.500.500h2L6.500 4.500l3 4h-2L5 6 2.500 8.500h-2l3-4z" strokeDasharray="1.500 .7" /></svg>
);
const DockTitle = ({ t }: { t: string }) => (
  <div className="flex h-[22px] shrink-0 items-center justify-between border-b border-[#555] bg-linear-to-b from-[#c6c6c6] via-[#ececec] to-[#c8c8c8] pl-[3px] pt-px">
    <span className="leading-none">{t}</span>
    <div className="flex gap-px">
      <FloatGlyph />
      <div className="flex size-4 items-center justify-center border-b border-r border-[#333] bg-[#e4e4e4]"><CloseGlyph /></div>
    </div>
  </div>
);

const ObjectBrowser = () => (
  <div className="flex w-[338px] shrink-0 flex-col">
    <DockTitle t="Object Browser" />
    <div className="mr-[2px] mt-px flex h-[739px] flex-col border-l-2 border-t-2 border-[#111] bg-white">
      <div className="flex h-[23px] shrink-0 bg-[#e8e8e8] pt-px">
        <div className="flex w-[25px] items-center justify-center border-b border-r border-[#333] bg-linear-to-b from-white to-[#c0c0c0]"><Eye k={2} /></div>
        <div className="ml-px flex w-[246px] items-center justify-center border-b border-r border-[#333] bg-linear-to-b from-white to-[#bcbcbc] tracking-[0.3px]">Name</div>
      </div>
      {rows.map((row, i) => (
        <TreeRow key={i} row={row} />
      ))}
    </div>
    <div className="relative h-[22px]">
      <svg width={338} height={22} className="absolute inset-0">
        <path d="M0 .5H338" stroke="#333" />
        <path d="M111 1H199L182 20.500H111z" fill="#c8c8c8" stroke="#555" />
        <path d="M0 0H118L101 20.500H1z" fill="#e8e8e8" stroke="#555" />
      </svg>
      <div className="relative flex h-[22px] items-center pl-[12px]">
        <span className="w-[109px]">Object Browser</span>
        <span className="relative -top-px">NoteBook</span>
      </div>
    </div>
  </div>
);

/* ---------- 3D scene ---------- */

const curve = (p: Pt[]) => {
  let d = `M${p[0][0]} ${p[0][1]}`;
  for (let i = 0; i < p.length - 1; i++) {
    const a = p[i - 1] || p[i], b = p[i], c = p[i + 1], e = p[i + 2] || c;
    d += `C${b[0] + (c[0] - a[0]) / 6} ${b[1] + (c[1] - a[1]) / 6} ${c[0] - (e[0] - b[0]) / 6} ${c[1] - (e[1] - b[1]) / 6} ${c[0]} ${c[1]}`;
  }
  return d;
};
const silhouette: Pt[] = [[330, 252], [349, 240], [417, 205], [560, 158], [760, 135], [960, 155], [1097, 205], [1145, 237], [1183, 272], [1203, 305], [1211, 330], [1214, 370]];
const crease: Pt[] = [[330, 256], [349, 245], [428, 205], [560, 165], [760, 142], [950, 160], [1080, 205], [1135, 236], [1180, 273], [1202, 308], [1212, 345]];
const lip1: Pt[] = [[330, 283], [349, 272], [389, 250], [507, 205], [620, 180], [760, 172], [890, 181], [997, 205], [1085, 236], [1150, 277], [1187, 306], [1208, 340], [1213, 365]];
const lip2: Pt[] = [[330, 286], [349, 275], [389, 253], [520, 205], [620, 184], [760, 176], [880, 185], [1009, 205], [1083, 240], [1148, 280], [1183, 307], [1206, 342], [1213, 372]];
const torus: Pt[] = [[330, 304], [349, 293], [395, 266], [470, 235], [560, 211], [650, 198], [760, 192], [870, 199], [960, 215], [1060, 242], [1120, 272], [1163, 303], [1195, 340], [1212, 380]];
const edge: Pt[] = [[330, 312], [349, 300], [390, 277], [423, 261], [483, 238], [573, 217.500], [685, 204], [768, 200], [853, 204.500], [897, 210.500], [967, 223.500], [1062, 250.500], [1120, 280], [1157, 304], [1190, 337], [1212, 380], [1217, 400]];

const Ell = ({ m, ...p }: { m: string } & React.SVGProps<SVGCircleElement>) => <circle r={1} transform={`matrix(${m})`} vectorEffect="non-scaling-stroke" {...p} />;

const Scene = () => (
  <svg width={1568} height={722} viewBox="349 205 1568 722" className="block shrink-0 bg-black">
    <defs>
      <linearGradient id="side" gradientUnits="userSpaceOnUse" x1={349} y1={0} x2={1219} y2={0}>
        <stop offset="0" stopColor="#5b5b5b" /><stop offset=".2" stopColor="#777" /><stop offset=".42" stopColor="#898989" />
        <stop offset=".6" stopColor="#7b7b7b" /><stop offset=".8" stopColor="#616161" /><stop offset=".93" stopColor="#484848" /><stop offset="1" stopColor="#2c2c2c" />
      </linearGradient>
      <linearGradient id="rim" gradientUnits="userSpaceOnUse" x1={349} y1={0} x2={1219} y2={0}>
        <stop offset="0" stopColor="#5e5e5e" /><stop offset=".4" stopColor="#767676" /><stop offset=".8" stopColor="#5c5c5c" /><stop offset="1" stopColor="#484848" />
      </linearGradient>
      <linearGradient id="tor" gradientUnits="userSpaceOnUse" x1={349} y1={0} x2={1219} y2={0}>
        <stop offset="0" stopColor="#6c6c6c" /><stop offset=".4" stopColor="#a4a4a4" /><stop offset=".7" stopColor="#8a8a8a" /><stop offset="1" stopColor="#4c4c4c" />
      </linearGradient>
      <filter id="soft" filterUnits="userSpaceOnUse" x={200} y={150} width={1100} height={750}><feGaussianBlur stdDeviation="2.200" /></filter>
    </defs>
    <path d={curve(silhouette) + "L1219 600H330z"} fill="url(#side)" />
    <path d={curve(crease)} fill="none" stroke="#000" />
    <path d={curve(lip1) + "L1216 600H330z"} fill="#464646" />
    <path d={curve(torus)} fill="none" stroke="url(#tor)" strokeWidth={9} filter="url(#soft)" />
    <path d={curve(edge) + "C1216 450 1216 540 1219.500 590L744 610H330z"} fill="url(#side)" />
    <path d={curve(lip1)} fill="none" stroke="#777" strokeWidth={3} />
    <path d={curve(lip1)} fill="none" stroke="#000" />
    <path d={curve(lip2)} fill="none" stroke="#000" />
    <path d={curve(edge)} fill="none" stroke="#000" strokeWidth={1.500} />
    <Ell m="472.500,-15,0,216,747,608" fill="url(#rim)" />
    <g filter="url(#soft)">
      <Ell m="466.500,-15,0,211,746,611" fill="none" stroke="url(#tor)" strokeWidth={6} opacity={0.85} />
    </g>
    <Ell m="472.500,-15,0,216,747,608" fill="none" stroke="#000" />
    <Ell m="460.500,-16,0,207,744.500,616.500" fill="#464646" stroke="#000" />
    <path d="M387.500 205L388.500 251M396 262q-4 6 4 10M389 278L395 466q1 9 9 16" stroke="#000" fill="none" />
    <path d="M1063 250.500L1153 205" stroke="#f00" strokeWidth={1.200} />
    <path d="M1218 602l28 11" stroke="#0c0" strokeWidth={1.200} />
    <g strokeWidth={1.300}>
      <path d="M438.500 836v-30" stroke="#1010d0" /><path d="M438.500 795l-4 10h9z" fill="#1010d0" />
      <path d="M438.500 836l26-13" stroke="#e00000" /><path d="M473 819l-9 8-4-7z" fill="#e00000" />
      <path d="M438.500 836l22 8" stroke="#00e000" /><path d="M471 848l-11 0 3-8z" fill="#00e000" />
    </g>
    <g fontFamily="Noto Sans, sans-serif" fontSize={14} fontStyle="italic">
      <text x={439} y={802} fill="#1818c8">Z</text>
      <text x={470} y={821} fill="#f00000">X</text>
      <text x={468} y={848} fill="#00f000">Y</text>
    </g>
  </svg>
);

/* ---------- dialog ---------- */

const WinButtons = ({ dim }: { dim?: boolean }) => (
  <div className="flex items-center gap-[13px]">
    <div className={dim ? "h-[2px] w-2 bg-[#8c8c8c]" : "h-[2px] w-2 bg-[#ddd]"} />
    <div className={dim ? "size-2 border-2 border-[#e2503c]" : "size-2 border-2 border-[#ddd]"} />
    <svg width={8} height={8} stroke={dim ? "#8c8c8c" : "#ddd"} strokeWidth={2}><path d="M.5.500l7 7M7.500.500l-7 7" /></svg>
  </div>
);

const Field = ({ v, w, caret }: { v: string; w: string; caret?: boolean }) => (
  <div className={"flex h-[20px] items-center border border-b-[#333] border-l-[#999] border-r-[#333] border-t-[#999] bg-linear-to-b from-[#dcdcdc] via-white via-35% to-white pl-[3px] " + w}>
    <span className="leading-none tracking-[0.150px]">{v}</span>
    {caret && <span className="h-[14px] w-px bg-black" />}
  </div>
);

const PickButton = ({ on }: { on?: boolean }) => (
  <div className={on
    ? "flex h-[22px] w-[23px] items-center justify-center border border-b-white border-l-[#333] border-r-white border-t-[#333] bg-linear-to-b from-[#c4c4c4] to-[#eee]"
    : "flex h-[28px] w-[32px] items-center justify-center border border-b-[#333] border-l-[#aaa] border-r-[#333] border-t-[#aaa] bg-linear-to-b from-white to-[#bcbcbc]"}>
    <svg width={14} height={16} className="drop-shadow-[1px_1px_1px_rgba(0,0,0,0.5)]"><path d="M5.500 14.500L3 14Q1 8 4 5.500 5.500 4 7.500 4L6 2l7-.5L12.500 8 10.500 6.500Q6 8 6.500 11z" fill="#3c86e0" stroke="#15305c" /></svg>
  </div>
);

const Radio = ({ t, on, w }: { t: string; on?: boolean; w: string }) => (
  <div className={"flex shrink-0 items-center gap-[6px] whitespace-nowrap " + w}>
    <svg width={12} height={12} className="shrink-0"><circle cx={6} cy={6} r={5.500} fill="#fff" stroke="#999" /><path d="M10 2a5.500 5.500 0 0 1-8 8" stroke="#222" fill="none" />{on && <circle cx={6} cy={6} r={2.300} fill="#000" />}</svg>
    <span className="leading-none">{t}</span>
  </div>
);

const Group = ({ t, w, h, children }: { t: string; w: number; h: string; children: React.ReactNode }) => (
  <div className={"relative ml-3 w-[405px] border border-b-black border-l-white border-r-black border-t-white " + h}>
    <div className="absolute -top-[8px] left-[7px] flex h-[15px] items-center">
      <svg width={w} height={15} className="absolute inset-0">
        <path d={`M2.500.500H${w - 7}L${w - 0.500} 7.500 ${w - 7} 14.500H2.500L.5 12.500V2.500z`} fill="#d2d2d2" stroke="#777" />
      </svg>
      <span className="relative -top-px whitespace-nowrap pl-[2px] leading-none tracking-[0.100px]">{t}</span>
    </div>
    {children}
  </div>
);

const Push = ({ a, u, b, w }: { a?: string; u: string; b: string; w: string }) => (
  <div className={"flex h-[26px] items-center justify-center border border-b-[#333] border-l-[#aaa] border-r-[#333] border-t-[#aaa] bg-linear-to-b from-white to-[#b8b8b8] " + w}>
    <span className="whitespace-nowrap">{a}<u className="underline-offset-[4px] [text-decoration-skip-ink:none]">{u}</u>{b}</span>
  </div>
);

const Dialog = () => (
  <div className="absolute left-[1243px] top-[149px] flex h-[745px] w-[429px] flex-col border border-[#4a4a4a] bg-[#e6e6e6] shadow-[3px_3px_3px_rgba(0,0,0,0.15)]">
    <div className="flex h-[23px] shrink-0 items-center bg-[#2d2d2d] pb-[2px] pr-[11px]">
      <span className="ml-[137px] flex-1 font-['Noto_Sans_CJK_KR','Noto_Sans',sans-serif] text-[13.700px] font-bold leading-none text-[#d8d8d8]">Create Group</span>
      <WinButtons />
    </div>
    <div className="mt-[11px] flex h-[28px] items-center pl-[11px]">
      <span className="w-[56px]">Mesh</span>
      <PickButton />
      <div className="ml-[6px]"><Field v="Mesh_1" w="w-[311px]" /></div>
    </div>
    <div className="-ml-px mt-[13px] h-[52px]">
      <Group t="Elements Type" w={91} h="h-[52px]">
        <div className="mt-[22px] flex pl-[12px]">
          <Radio t="Node" w="w-[59px]" /><Radio t="0D Element" w="w-[95px]" /><Radio t="Ball" w="w-[49px]" />
          <Radio t="Edge" w="w-[57px]" /><Radio t="Face" w="w-[54px]" on /><Radio t="Volume" w="w-[60px]" />
        </div>
      </Group>
    </div>
    <div className="mt-[6px] flex h-[20px] items-center pl-[11px]">
      <span className="w-[94px]">Name</span>
      <Field v="ORING_CONTACT" w="w-[311px]" caret />
    </div>
    <div className="-ml-px mt-[13px] h-[52px]">
      <Group t="Group type" w={75} h="h-[52px]">
        <div className="mt-[22px] flex pl-[12px] tracking-[-0.100px]">
          <Radio t="Standalone group" w="w-[129px]" /><Radio t="Group on geometry" w="w-[139px]" on /><Radio t="Group on filter" w="w-[110px]" />
        </div>
      </Group>
    </div>
    <div className="mt-[6px] flex h-[22px] items-center pl-[11px]">
      <span className="w-[115px] whitespace-nowrap">Geometrical Object</span>
      <PickButton on />
      <div className="ml-[6px]"><Field v="ORING_CONTACT" w="w-[261px]" /></div>
    </div>
    <div className="-ml-px mt-[375px] h-[55px]">
      <Group t="Color group" w={78} h="h-[55px]">
        <div className="mt-[19px] flex h-[22px] items-center pl-[12px]">
          <span className="w-[37px]">Color</span>
          <div className="flex h-[22px] w-[330px] border border-b-[#333] border-l-[#999] border-r-[#333] border-t-[#999] bg-[#eee] p-[2px]">
            <div className="flex-1 border border-black bg-[#ffaa00]" />
          </div>
          <div className="flex h-[22px] w-[12px] items-center justify-center border border-b-[#333] border-l-white border-r-[#333] border-t-[#aaa] bg-linear-to-b from-white to-[#bbb]">
            <svg width={8} height={8}><path d="M3 1h2v3h2L4 7 1 4h2z" fill="#333" stroke="#000" /></svg>
          </div>
        </div>
      </Group>
    </div>
    <div className="ml-[11px] mt-[6px] flex h-[49px] w-[404px] shrink-0 items-center border border-[#777] pl-[11px] shadow-[1px_1px_0_#fff,inset_1px_1px_0_#fff]">
      <Push a="A" u="p" b="ply and Close" w="w-[102px]" />
      <div className="ml-[17px]"><Push u="A" b="pply" w="w-[77px]" /></div>
      <div className="ml-[26px]"><Push u="C" b="lose" w="w-[77px]" /></div>
      <div className="ml-[6px]"><Push u="H" b="elp" w="w-[77px]" /></div>
    </div>
    <svg width={13} height={13} className="absolute bottom-0 right-0" stroke="#555"><path d="M0 13L13 0M4 13l9-9M8 13l5-5" strokeWidth={1.500} /></svg>
  </div>
);

/* ---------- desktop panel ---------- */

const Disc = ({ c, children }: { c: string; children?: React.ReactNode }) => (
  <g><circle cx={16} cy={16} r={15} fill={c} />{children}</g>
);
const Chrome = () => (
  <g>
    <circle cx={16} cy={16} r={15} fill="#159858" />
    <path d="M16 16L3 8.500A15 15 0 0 1 29 8.500L31 12H16z" fill="#dd4b3e" />
    <path d="M16 10h13.800A15 15 0 0 1 16 31l6-12z" fill="#fdc010" />
    <circle cx={16} cy={16} r={6.800} fill="#fff" /><circle cx={16} cy={16} r={5.300} fill="#4285f4" />
  </g>
);
const Cog = ({ x, y, s, c }: { x: number; y: number; s: number; c: string }) => (
  <g fill="none" stroke={c}><circle cx={x} cy={y} r={s} strokeWidth={s * 0.8} /><circle cx={x} cy={y} r={s * 1.450} strokeWidth={s * 0.700} strokeDasharray={`${s * 0.760} ${s * 0.760}`} /></g>
);
const launchers: { n: React.ReactNode; run?: boolean; active?: boolean }[] = [
  { n: <Disc c="#3a3a3a"><Cog x={13} y={10} s={2.400} c="#e84a50" /><Cog x={11} y={19} s={2.400} c="#30b8d8" /><Cog x={20} y={17} s={2.400} c="#40c870" /></Disc> },
  { n: <Chrome /> },
  { n: <Disc c="#df5226"><path d="M8 3q6-3 10 0 6 1 8 6 2 6-2 11-2 5-8 6l-5-2q7 0 7-6-3 1-8 0l4-3q-3 0-5-4-1-4-1-8z" fill="#74c8e4" /><path d="M14 8q7 1 7 9M12 12q5 1 6 7" stroke="#dff4fb" fill="none" /></Disc>, run: true },
  { n: <Disc c="#f7e878"><path d="M9 8l3-1 4 1 4-1 3 1 2 4-2 7-7 6-7-6-2-7z" fill="#f08820" /><path d="M11 11l3 1 2-1 2 1 3-1 1 4-2 4-4 4-4-4-2-4z" fill="#fff" /><path d="M12 15l3 2M20 15l-3 2M16 17v4M14 20h4" stroke="#f08820" /></Disc> },
  { n: <g><ellipse cx={16} cy={16} rx={13} ry={14} fill="#4c92dc" stroke="#f5a30e" strokeWidth={2.500} /><path d="M23 6L9 26q10 4 17-7z" fill="#2a62ac" /></g> },
  { n: <Disc c="#5a5a5a"><path d="M9 9l6 6-6 6M17 22h7" stroke="#eee" strokeWidth={2.200} fill="none" /></Disc>, run: true },
  { n: <Disc c="#7864a4"><path d="M8 10h6l2 2h8v11H8z" fill="#ffc628" /></Disc>, run: true },
  { n: <g><circle cx={16} cy={16} r={13.500} fill="none" stroke="#2898c8" strokeWidth={3.400} strokeDasharray="60 6 12 7" /><rect x={1} y={11} width={9} height={10} rx={1} fill="#f57c20" /><rect x={24} y={5} width={5} height={5} fill="#f57c20" /><rect x={24} y={23} width={7} height={7} fill="#f57c20" /></g> },
  { n: <Disc c="#383838">{[[16, 8], [14, 12], [18, 12], [12, 16], [16, 17], [20, 16], [10, 21], [14, 22], [18, 22]].map(([x, y]) => <circle key={`${x}.${y}`} cx={x} cy={y} r={1.700} fill="#e03838" />)}<circle cx={22} cy={22} r={1.700} fill="#eee" /></Disc> },
  { n: <g><rect x={3} y={3} width={27} height={27} fill="#0d4068" /><path d="M3 8q14-4 27 8v6Q16 8 3 22z" fill="#1c84b0" /><path d="M8 9v13h6M15 11h9l-3 13" stroke="#bfe8f8" fill="none" strokeWidth={1.300} /></g> },
  { n: <Disc c="#f9d230"><g strokeWidth={4}><path d="M8 23l3-14" stroke="#d81c1c" /><path d="M14 23l3-14" stroke="#109c30" /><path d="M20 23l3-14" stroke="#222" /></g></Disc> },
  { n: <g><path d="M16 3v22L3 28z" fill="#fff" stroke="#222" strokeWidth={0.500} /><path d="M16 3l13 25-13-3z" fill="#000" /><path d="M3 28l13-3 13 3z" fill="#333" /></g> },
  { n: <g><rect x={0} y={8} width={32} height={16} fill="#1888d0" /><path d="M0 12q16 8 32-2v8q-14 5-32 0z" fill="#40a8e4" /><text x={3} y={18} fontSize={5.500} fontWeight={700} fill="#fff" fontFamily="Noto Sans, sans-serif" textLength={26} lengthAdjust="spacingAndGlyphs">Salome Meca</text></g> },
  { n: <Disc c="#403844"><circle cx={13} cy={12} r={4} fill="none" stroke="#b858a0" strokeWidth={1.400} /><path d="M13 16v9M10 21h6M21 8v11M21 22v2" stroke="#b858a0" strokeWidth={1.600} /></Disc> },
  { n: <Disc c="#efefef"><path d="M8 16q1-7 8-8 4 0 6 3M18 12h6V8" stroke="#c82848" strokeWidth={2.600} fill="none" /><path d="M24 16q-1 7-8 8-4 0-6-3M14 20H8v4" stroke="#282848" strokeWidth={2.600} fill="none" /></Disc> },
  { n: <Disc c="#efefef"><path d="M9 23V9h8M9 15h6" stroke="#e05020" strokeWidth={3.500} fill="none" /><Cog x={20} y={18} s={3.300} c="#3068b8" /></Disc> },
  { n: <g><path d="M9 4h15v5h-9v4h8v5h-8v5h9v5H9z" fill="#0e2030" stroke="#38b4f0" strokeWidth={1} /></g> },
  { n: <Disc c="#5a5c50"><path d="M16 8l8 14H8zM12 15h8l-4 7z" stroke="#f0ee60" fill="none" strokeWidth={1.400} /></Disc> },
  { n: <Disc c="#6658a0"><path d="M10 8v15h3q4-7-3-15zM17 8l7 15h-7z" stroke="#eee" fill="none" strokeWidth={1.800} /></Disc> },
  { n: <Disc c="#a868b4"><path d="M9 7h11l4 4v14H9z" fill="#f4ecf0" /><path d="M12 12h6M12 15h9M12 18h7M12 21h9" stroke="#a868b4" strokeWidth={1.300} /></Disc> },
  { n: <g><path d="M1 9l7 2q3-3 6-3l2-3 2 3q4 0 7 2l6-2-2 4-6 1q-2 5-6 6v5l4 4H11l4-4v-5q-5-1-7-6l-6-1z" fill="#a87018" stroke="#5c3c08" strokeWidth={0.800} /><path d="M11 12q5-2 10 0" stroke="#ffe070" strokeWidth={2} fill="none" /></g>, run: true, active: true },
  { n: <g><path d="M18 1q11 2 11 13-3 14-13 17Q3 26 3 15 5 3 18 1z" fill="#1420a8" /><path d="M18 1l-4 15M25 3l-11 13M29 10l-15 6M29 16l-15 0M26 22l-12-6M20 29l-6-13M13 30l1-14M7 25l7-9M3 18l11-2M4 10l10 6M10 4l4 12" stroke="#18b848" strokeWidth={1.300} /><circle cx={15} cy={14} r={3} fill="#3038d8" /></g> },
  { n: <Chrome />, run: true },
];

const bars = [5, 4, 6, 5, 8, 5, 4, 6, 9, 5, 6, 5, 6, 7, 6, 8, 7, 10, 19, 12, 7, 14, 5, 6, 8, 5, 7, 6, 9, 10, 8, 11, 9, 10, 8, 6, 5];

const Panel = () => (
  <div className="flex h-[40px] shrink-0 bg-[#ad6ff0] shadow-[inset_0_4px_0_#7c50a8]">
    {launchers.map((l, i) => (
      <div key={i} className={l.active ? "relative flex w-[54px] shrink-0 items-center justify-center bg-linear-to-b from-transparent to-[#cf8cb0]" : "relative flex w-[54px] shrink-0 items-center justify-center"}>
        <svg width={32} height={32}>{l.n}</svg>
        {l.run && <div className="absolute bottom-0 h-[3px] w-[3px] rounded-full bg-[#ffb0a0] shadow-[0_0_6px_3px_#e03838]" />}
      </div>
    ))}
    <div className="ml-auto flex items-center pr-[16px] pt-[4px]">
      <span className="w-[232px] whitespace-nowrap font-['Noto_Sans_CJK_KR',sans-serif] text-[16.700px] leading-none text-white">토요일 2016년 07월 30일 01:04</span>
      <div className="flex h-[21px] w-[21px] items-center justify-center rounded-[5px] border border-[#aaa] bg-[#cfcfcf] text-[14px] font-bold leading-none text-[#222]">en</div>
      <svg width={21} height={16} className="ml-[5px]" fill="#eee"><path d="M1 5h4l4-4v14l-4-4H1z" /><path d="M12 5q2 3 0 6M15 3q4 5 0 10M18 1q5 7 0 14" fill="none" stroke="#eee" strokeWidth={1.400} /></svg>
      <svg width={16} height={18} className="ml-[9px]" stroke="#eee" strokeWidth={2.400} fill="none"><path d="M4 14V3M1 6l3-4 3 4M12 4v12M9 12l3 4 3-4" /></svg>
      <svg width={18} height={22} className="ml-[10px]"><path d="M3 4q6-5 12 0l-1 4H4z" fill="#1c2c8c" /><rect x={4} y={7} width={10} height={9} rx={3} fill="#50c8dc" stroke="#146" /><path d="M1 9v5M17 9v5" stroke="#e33" strokeWidth={2} /><path d="M6 10h6M6 13h6" stroke="#a22" strokeWidth={1.600} /><path d="M9 16v6" stroke="#4bd" strokeWidth={2} /></svg>
      <svg width={14} height={19} className="ml-[10px]"><path d="M7 1a6.500 6.500 0 0 1 0 13v4Q0 13 .5 7.500A6.500 6.500 0 0 1 7 1z" fill="#4ca848" /><path d="M4 6h2v3M8.500 6h2v3" stroke="#fff" strokeWidth={1.800} fill="none" /></svg>
      <svg width={37} height={30} className="ml-[10px] bg-black">{bars.map((h, i) => <rect key={i} x={i} y={30 - h} width={1} height={h} fill="#00f4f4" />)}</svg>
      <svg width={36} height={30} className="ml-[5px] bg-black"><rect y={11} width={36} height={19} fill="#045824" /></svg>
    </div>
  </div>
);

/* ---------- application ---------- */

export default function App() {
  return (
    <div className="relative flex h-[1080px] w-[1920px] flex-col overflow-hidden bg-[#e7e7e7] font-['Noto_Sans','Noto_Sans_CJK_KR',sans-serif] text-[12px] leading-none text-[#2e2e2e]">
      <header className="grid h-[23px] shrink-0 grid-cols-[1fr_auto_1fr] items-center border-t border-[#3c3c3c] bg-[#2d2d2d] pb-px pr-[10px]">
        <span />
        <span className="-translate-x-[27px] font-['Noto_Sans_CJK_KR','Noto_Sans',sans-serif] text-[12.200px] font-bold leading-none text-[#8a8a8a]">Salome-Meca 2015.2_LGPL - [BOX_TOTAL]</span>
        <div className="flex justify-end"><WinButtons dim /></div>
      </header>
      <nav className="flex h-[21px] shrink-0 items-center bg-linear-to-b from-white to-[#e8e8e8] pb-[2px] pl-[6px]">
        {menus.map(([u, t, w]) => (
          <span key={t} className={w}><u className="underline-offset-[4px]">{u}</u>{t}</span>
        ))}
        <svg width={136} height={19} className="ml-auto mr-[2px]">
          <text x={1} y={16} fontFamily="DejaVu Sans, sans-serif" fontWeight={700} fontSize={16} fill="#c4ccd2" stroke="#3c444a" strokeWidth={1.100} textLength={132} lengthAdjust="spacingAndGlyphs">SALOME 7</text>
        </svg>
      </nav>
      <Bar>
        <Grip /><div className="w-[3px]" /><Slots items={fileIcons} /><Sep /><Slots items={editIcons} />
        <div className="w-[6px]" /><Grip />
        <div className="ml-[3px] flex h-[22px] w-[135px] -translate-y-[2px] items-center border border-b-[#333] border-l-[#888] border-r-[#333] border-t-[#888] bg-linear-to-b from-[#d8d8d8] via-white via-40% to-white pl-[3px]">
          <svg width={14} height={14} viewBox="0 0 24 24">{moduleIcons[1]}</svg>
          <span className="ml-1 flex-1">Mesh</span>
          <div className="flex h-full w-[20px] items-center justify-center border-l border-[#333] bg-linear-to-b from-white to-[#b8b8b8]"><svg width={13} height={14}><path d="M5 1h3v6h3l-4.500 6L2 7h3z" fill="#333" stroke="#000" /></svg></div>
        </div>
        <div className="flex w-[30px] justify-center font-['Liberation_Sans',sans-serif] text-[9px] font-bold italic text-[#1058a8]"><span className="-translate-y-[3px] scale-y-125 tracking-[-0.600px]">Aster</span></div>
        <Slot>{moduleIcons[0]}</Slot>
        <Slot on>{moduleIcons[1]}</Slot>
        <Slots items={moduleIcons.slice(2)} />
        <div className="flex w-[31px] justify-center font-['Liberation_Sans',sans-serif] text-[9px] font-bold text-[#e8481c]"><span className="scale-x-[0.620] scale-y-[1.300]">EFICAS</span></div>
        <div className="w-[31px] text-center font-['DejaVu_Sans',sans-serif] text-[8.500px] font-bold text-[#10108c]">EPX</div>
      </Bar>
      <Bar>
        <Grip /><div className="w-[3px]" /><Slots items={row2a} /><Sep /><Slots items={gears} />
        <div className="w-[5px]" /><Grip /><div className="w-[3px]" /><Slots items={row2b} />
        <div className="w-[7px]" /><Grip /><div className="w-[3px]" /><Slots items={row2c} />
        <div className="w-[6px]" /><Grip /><div className="w-[3px]" /><Slots items={row2d} />
      </Bar>
      <Bar>
        <Grip /><div className="w-[3px]" /><Slots items={row3a} /><div className="w-[6px]" /><Grip /><div className="w-[3px]" /><Slots items={row3b} />
        <div className="w-[6px]" /><Grip /><div className="w-[3px]" /><Slots items={row3c} /><div className="w-[6px]" /><Grip /><div className="w-[3px]" /><Slots items={row3d} />
        <div className="w-[7px]" /><Grip /><div className="w-[2px]" /><Slots items={row3e} /><div className="w-[7px]" /><Grip /><div className="w-[3px]" /><Slots items={row3f} />
      </Bar>

      <main className="flex h-[785px] shrink-0">
        <ObjectBrowser />
        <div className="flex w-[7px] items-center justify-center">
          <svg width={3} height={14} className="-translate-y-px">{[0, 1, 2, 3, 4].map((i) => <rect key={i} x={0} y={i * 3} width={2} height={2} fill="#888" />)}</svg>
        </div>
        <section className="flex w-[1575px] flex-col border-l border-black">
          <div className="flex h-[785px] flex-col border-b-[3px] border-l-[3px] border-r-2 border-t-2 border-b-white border-l-[#777] border-r-white border-t-[#777]">
            <div className="relative flex h-[23px] shrink-0 items-center pt-[3px]">
              <svg width={1568} height={23} className="absolute inset-0">
                <defs><linearGradient id="tab" x2="0" y2="1"><stop offset="0" stopColor="#e2e2e2" /><stop offset=".3" stopColor="#c8c8c8" /><stop offset=".7" stopColor="#c6c6c6" /><stop offset="1" stopColor="#e8e8e8" /></linearGradient></defs>
                <path d="M1 1.500H506L516 12V22H1z" fill="url(#tab)" stroke="#f6f6f6" />
                <path d="M0 22.500H1552" stroke="#fff" />
              </svg>
              <span className="relative w-[515px] text-center tracking-[0.050px]">OCC scene:1 - viewer:1</span>
              <span className="relative w-[504px] text-center tracking-[0.050px] text-[#26268c]">VTK scene:1 - viewer:1</span>
              <div className="relative ml-auto pr-[4px]"><CloseGlyph /></div>
            </div>
            <div className="flex h-[34px] shrink-0 items-center border-b border-black bg-linear-to-b from-white to-[#e6e6e6] pl-1 pt-px">
              <Grip /><div className="w-[3px]" />
              <Slot>{view.camera}</Slot><Slot>{view.mouse}</Slot><Slot on>{view.zoomAxis}</Slot><Sep />
              <Slot on>{view.selBlue}</Slot><Slot>{view.selHalf}</Slot><Slot>{view.selRed}</Slot><Slot on>{view.selGold}</Slot><Sep />
              <Slot on>{view.axes}</Slot>
              <Slots items={viewMore} />
            </div>
            <Scene />
          </div>
        </section>
      </main>

      <div className="flex h-[6px] shrink-0 items-center justify-center border-t border-white">
        <svg width={15} height={2}>{[0, 1, 2, 3, 4].map((i) => <rect key={i} x={i * 3} y={0} width={2} height={2} fill="#888" />)}</svg>
      </div>
      <section className="flex h-[82px] shrink-0 flex-col border-t border-black">
        <DockTitle t="Python Console" />
        <div className="mr-[2px] mt-px h-[58px] border-l-2 border-t-2 border-[#222] bg-white pl-1 pt-[4px]">
          <span className="inline-block origin-left scale-x-[0.850] scale-y-[1.700] font-['Noto_Sans'] text-[17px] font-light leading-[16px] tracking-[-0.800px]">&gt;&gt;&gt;</span>
        </div>
      </section>
      <footer className="mb-[2px] mt-[3px] h-[17px] shrink-0 border-l border-t border-[#777]" />
      <Panel />
      <Dialog />
    </div>
  );
}
